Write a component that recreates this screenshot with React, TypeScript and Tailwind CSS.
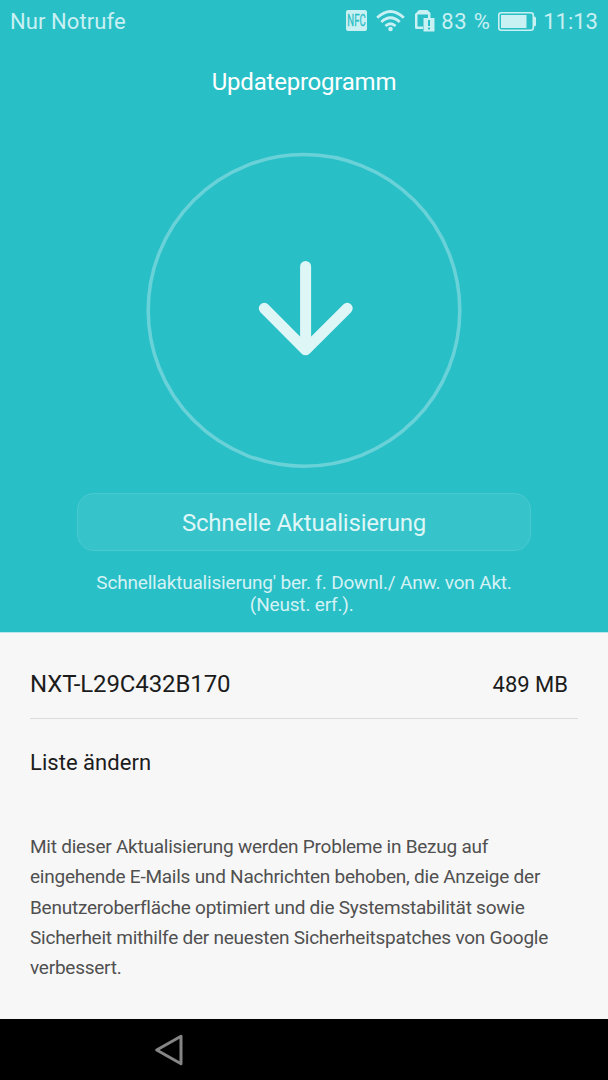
function NfcIcon() {
  return (
    <div className="flex h-[21px] w-[21px] items-center justify-center rounded-[2px] bg-[#c9f0f2]">
      <svg className="overflow-visible" width="21" height="21" viewBox="0 0 21 21">
        <text transform="translate(1.300 16.400) scale(0.600 1)" fontSize="16" fill="#29bfc7" stroke="#29bfc7" strokeWidth="0.300">NFC</text>
      </svg>
    </div>
  );
}

function WifiIcon() {
  return (
    <svg width="29" height="22" viewBox="0 0 29 22" fill="none" stroke="#c9f0f2" strokeWidth="2.800">
      <path d="M1.200 7.800Q14.500 -4.800 27.800 7.800M5.300 12Q14.500 3.600 23.700 12M9.400 16Q14.500 11.600 19.600 16" />
      <circle cx="14.500" cy="19" r="2.300" fill="#c9f0f2" stroke="none" />
    </svg>
  );
}

function SimAlertIcon() {
  return (
    <svg width="20" height="22" viewBox="0 0 20 22">
      <path d="M4 0H12.500L15.500 3V8H13V4.500H2.500V16.500H8V19H1.500Q0 19 0 17.500V4Z" fill="#c9f0f2" />
      <rect x="8.500" y="8" width="11" height="13.500" rx="0.500" fill="#c9f0f2" />
      <path d="M14 10V16M14 17.500V19.500" stroke="#29bfc7" strokeWidth="2" />
    </svg>
  );
}

function BatteryIcon() {
  return (
    <svg width="38" height="19" viewBox="0 0 38 19">
      <rect x="0.800" y="0.800" width="34.500" height="17.400" rx="2.500" fill="none" stroke="#c9f0f2" strokeWidth="1.600" />
      <rect x="3" y="3" width="25.500" height="13" fill="#c9f0f2" />
      <path d="M36 5H36.500Q37.500 5 37.500 6V13Q37.500 14 36.500 14H36Z" fill="#c9f0f2" stroke="#c9f0f2" />
    </svg>
  );
}

function StatusBar() {
  return (
    <div className="flex h-[42px] w-full items-center justify-between px-2.5 text-[22px] text-[#c9f0f2]">
      <span className="tracking-[0.08px]">Nur Notrufe</span>
      <div className="flex items-center">
        <div className="-mt-px"><NfcIcon /></div>
        <div className="ml-[9px]"><WifiIcon /></div>
        <div className="-mt-px mr-[6px] ml-[10px]"><SimAlertIcon /></div>
        <span className="w-[50px] tracking-[0.8px] whitespace-nowrap">83 %</span>
        <div className="mr-[7px] ml-[7px]"><BatteryIcon /></div>
        <span>11:13</span>
      </div>
    </div>
  );
}

export default function App() {
  return (
    <div className="flex h-[1080px] w-[608px] flex-col bg-[#f7f7f7] font-['Roboto',sans-serif]">
      <section className="flex h-[633px] flex-col items-center border-b border-[#b9e7ea] bg-[#29bfc7] text-white">
        <StatusBar />
        <h1 className="mt-[22px] text-2xl leading-9 tracking-[-0.22px]">Updateprogramm</h1>
        <svg className="mt-[52px]" width="316" height="316" viewBox="0 0 316 316" fill="none">
          <circle cx="158" cy="158.400" r="155.800" stroke="#69d2d8" strokeWidth="3.500" />
          <path d="M159.600 114.500V190M118.300 156.300L159.600 197.800L201.200 156.300" stroke="#dff6f7" strokeWidth="11" strokeLinecap="round" strokeLinejoin="round" />
        </svg>
        <button className="mt-[25px] h-[58px] w-[454px] rounded-[17px] border border-[#4ac9d0] bg-[#36c3ca] pt-0.5 text-2xl tracking-[-0.22px] text-[#dff6f7]">
          Schnelle Aktualisierung
        </button>
        <p className="mt-[21px] text-center text-[19px] leading-[22px] tracking-[-0.18px] text-[#d4f2f4]">
          Schnellaktualisierung' ber. f. Downl./ Anw. von Akt.<br />(Neust. erf.).&nbsp;
        </p>
      </section>
      <main className="flex h-[386px] flex-col px-[30px] text-[#1c1c1c]">
        <div className="flex h-[86px] items-end justify-between border-b border-[#dcdcdc] pr-2.5 pb-[15px]">
          <span className="mb-px text-2xl leading-9 tracking-[-0.1px]">NXT-L29C432B170</span>
          <span className="text-[22px] leading-9">489 MB</span>
        </div>
        <h2 className="mt-[26px] text-[22px] leading-9 tracking-[0.04px]">Liste ändern</h2>
        <p className="mt-[51px] text-[19px] leading-[30.300px] tracking-[-0.24px] whitespace-nowrap text-[#505050]">
          Mit dieser Aktualisierung werden Probleme in Bezug auf<br />
          eingehende E-Mails und Nachrichten behoben, die Anzeige der<br />
          Benutzeroberfläche optimiert und die Systemstabilität sowie<br />
          Sicherheit mithilfe der neuesten Sicherheitspatches von Google<br />
          verbessert.
        </p>
      </main>
      <nav className="flex h-[61px] items-center bg-black pl-[154px]">
        <svg width="30" height="32" viewBox="0 0 30 32" fill="none" stroke="#858585" strokeWidth="3" strokeLinejoin="round">
          <path d="M2.700 16L27 2.200V29.800Z" />
        </svg>
      </nav>
    </div>
  );
}
